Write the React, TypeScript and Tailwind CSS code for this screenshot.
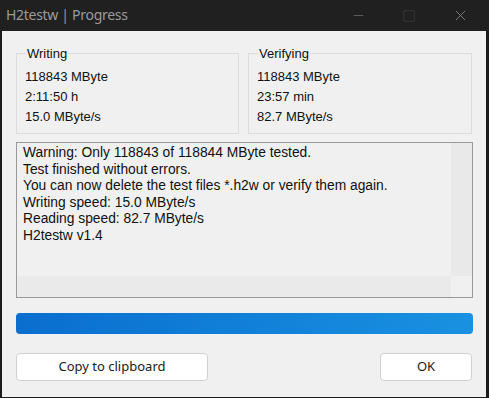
import { Minus, Square, X } from "lucide-react"

const groups = [
  { title: "Writing", lines: ["118843 MByte", "2:11:50 h", "15.0 MByte/s"] },
  { title: "Verifying", lines: ["118843 MByte", "23:57 min", "82.7 MByte/s"] },
]

const log = [
  "Warning: Only 118843 of 118844 MByte tested.",
  "Test finished without errors.",
  "You can now delete the test files *.h2w or verify them again.",
  "Writing speed: 15.0 MByte/s",
  "Reading speed: 82.7 MByte/s",
  "H2testw v1.4",
]

export default function App() {
  return (
    <div className="w-[489px] h-[398px] bg-[#1b1b1b] flex flex-col pl-[2px] pr-[3px] pb-[1px] overflow-hidden">
      {/* title bar */}
      <div className="h-[31px] shrink-0 flex items-center bg-[#202020] -ml-[2px] -mr-[3px] pl-[6px] pr-[20px]">
        <span className="text-[14px] text-[#9b9b9b] font-['Noto_Sans',sans-serif] tracking-[-0.3px] -mt-[2px]">
          H2testw | Progress
        </span>
        <div className="ml-auto flex items-center gap-[36px]">
          <Minus className="w-[15px] h-[15px] text-[#6d6d6d]" strokeWidth={1.2} />
          <Square className="w-[14px] h-[14px] text-[#404040]" strokeWidth={1.2} />
          <X className="w-[17px] h-[17px] text-[#8a8a8a]" strokeWidth={1.2} />
        </div>
      </div>

      {/* body */}
      <div className="flex-1 bg-[#f0f0f0] pl-[14px] pr-[13px] pt-[15px] text-[#111] font-['Liberation_Sans',sans-serif]">
        <div className="flex gap-[9px] pr-[1px]">
          {groups.map((g, i) => (
            <fieldset
              key={g.title}
              className={`h-[88px] border border-[#dcdcdc] pl-[8px] ${i === 0 ? "w-[224px]" : "w-[225px]"}`}
            >
              <legend className="ml-[1px] px-[1px] text-[13px] leading-[15px]">{g.title}</legend>
              <div className="flex flex-col text-[13px] leading-[20px] mt-[6px]">
                {g.lines.map((l) => (
                  <span key={l}>{l}</span>
                ))}
              </div>
            </fieldset>
          ))}
        </div>

        {/* log box */}
        <div className="mt-[8px] h-[156px] border border-[#999] bg-[#f0f0f0] flex flex-col">
          <div className="flex-1 flex">
            <div className="flex-1 pl-[6px] pt-[2px] text-[13.8px] leading-[16.6px] whitespace-nowrap overflow-hidden">
              {log.map((l) => (
                <div key={l}>{l}</div>
              ))}
            </div>
            <div className="w-[21px] bg-[#e9e9e9]" />
          </div>
          <div className="h-[21px] flex">
            <div className="flex-1 bg-[#eaeaea]" />
            <div className="w-[21px] bg-[#f0f0f0]" />
          </div>
        </div>

        {/* progress */}
        <div className="mt-[15px] h-[21px] rounded-[4px] bg-gradient-to-r from-[#0a6ecf] to-[#1a91e1]" />

        {/* buttons */}
        <div className="mt-[19px] flex justify-between pr-[1px] font-['Noto_Sans',sans-serif]">
          <button className="w-[192px] h-[28px] bg-white border border-[#d0d0d0] rounded-[4px] text-[13px] text-[#1a1a1a]">
            Copy to clipboard
          </button>
          <button className="w-[92px] h-[28px] bg-white border border-[#d0d0d0] rounded-[4px] text-[13px] text-[#1a1a1a]">
            OK
          </button>
        </div>
      </div>
    </div>
  )
}
